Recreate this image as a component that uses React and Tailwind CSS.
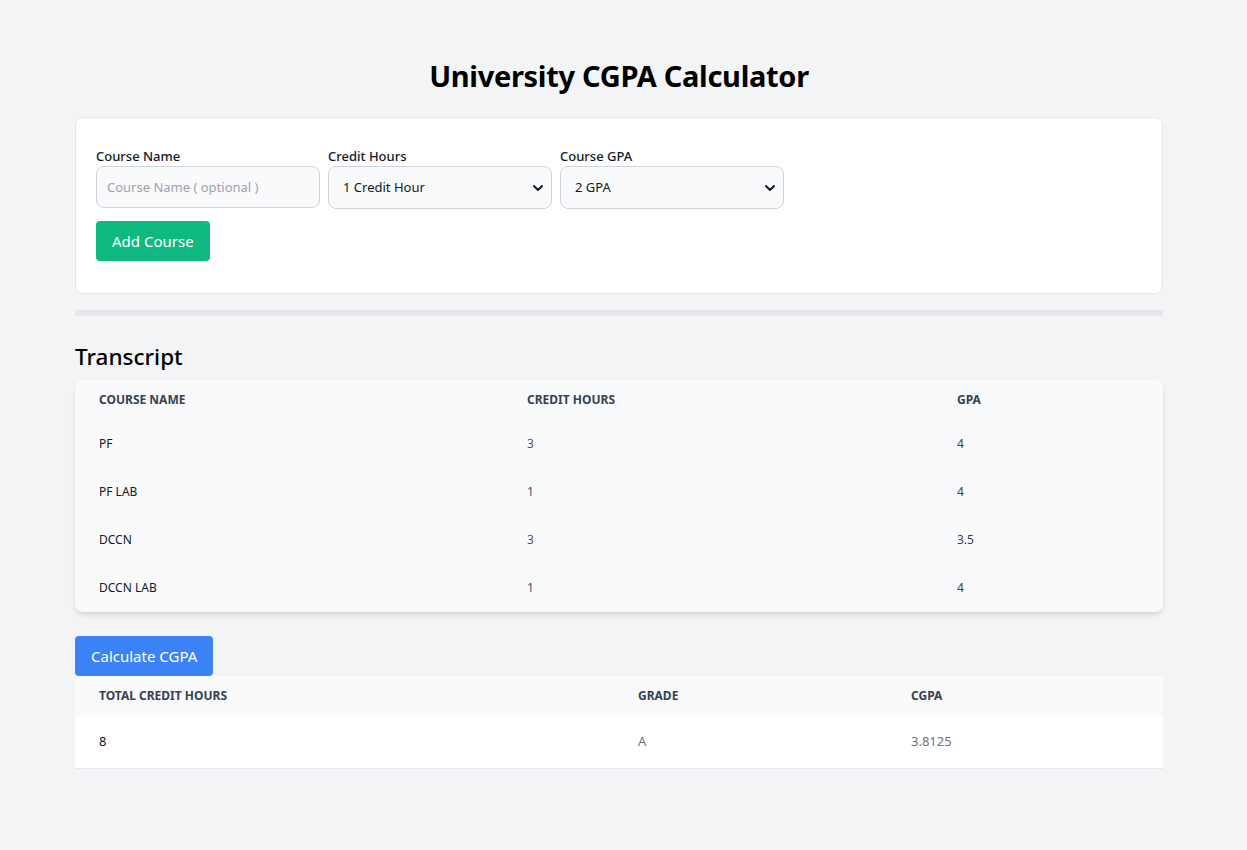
export default function App() {
  const rows = [
    { name: "PF", ch: "3", gpa: "4" },
    { name: "PF LAB", ch: "1", gpa: "4" },
    { name: "DCCN", ch: "3", gpa: "3.5" },
    { name: "DCCN LAB", ch: "1", gpa: "4" },
  ];
  const font = { fontFamily: '"Noto Sans", "Open Sans", sans-serif' };
  return (
    <div className="min-h-[850px] bg-[#f3f4f6] pb-20" style={font}>
      <div className="ml-[75px] flex w-[1088px] flex-col">
        <h1 className="pt-[56px] pb-[21px] text-center text-[29px] font-bold leading-[40px] text-black tracking-[-0.3px]">
          University CGPA Calculator
        </h1>

        <div className="flex flex-col rounded-lg border border-[#e5e7eb] bg-white px-5 pt-[29px] pb-[32px]">
          <div className="flex gap-2">
            <div className="flex w-[224px] flex-col">
              <label className="mb-[1px] text-[13px] font-medium leading-[18px] text-[#111827]">Course Name</label>
              <input
                placeholder="Course Name ( optional )"
                className="h-[42px] rounded-lg border border-[#d1d5db] bg-[#f9fafb] px-[10px] text-[13px] text-[#111827] placeholder:text-[#9ca3af] outline-none"
              />
            </div>
            <div className="flex w-[224px] flex-col">
              <label className="mb-[1px] text-[13px] font-medium leading-[18px] text-[#111827]">Credit Hours</label>
              <div className="flex h-[43px] items-center justify-between rounded-lg border border-[#d1d5db] bg-[#f9fafb] pl-[14px] pr-[5px]">
                <span className="text-[13px] text-[#111827]">1 Credit Hour</span>
                <Chevron />
              </div>
            </div>
            <div className="flex w-[224px] flex-col">
              <label className="mb-[1px] text-[13px] font-medium leading-[18px] text-[#111827]">Course GPA</label>
              <div className="flex h-[43px] items-center justify-between rounded-lg border border-[#d1d5db] bg-[#f9fafb] pl-[14px] pr-[5px]">
                <span className="text-[13px] text-[#111827]">2 GPA</span>
                <Chevron />
              </div>
            </div>
          </div>
          <div className="mt-3 flex">
            <button className="h-[40px] rounded bg-[#10b981] px-4 text-[15px] text-white">Add Course</button>
          </div>
        </div>

        <div className="mt-4 h-[6px] bg-[#e5e7eb]" />

        <h2 className="mt-[26px] mb-[8px] text-[22.5px] font-medium leading-[30px] text-black">Transcript</h2>

        <div className="rounded-lg bg-[#f9fafb] shadow-md">
          <div className="flex h-[40px] items-center text-[12px] font-bold uppercase text-[#374151]">
            <div className="w-[428px] pl-6">Course Name</div>
            <div className="w-[430px] pl-6">Credit Hours</div>
            <div className="flex-1 pl-6">GPA</div>
          </div>
          {rows.map((r) => (
            <div key={r.name} className="flex h-[48px] items-center text-[12px]">
              <div className="w-[428px] pl-6 font-normal text-[#111827]">{r.name}</div>
              <div className="w-[430px] pl-6 text-[#4b5563]">{r.ch}</div>
              <div className="flex-1 pl-6 text-[#374151]">{r.gpa}</div>
            </div>
          ))}
        </div>

        <div className="mt-6 flex">
          <button className="h-[40px] rounded bg-[#3b82f6] px-4 text-[15px] text-white">Calculate CGPA</button>
        </div>
        <div className="border-b border-[#e5e7eb]">
          <div className="flex h-[40px] items-center bg-[#f9fafb] text-[12px] font-bold uppercase text-[#374151]">
            <div className="w-[539px] pl-6">Total Credit Hours</div>
            <div className="w-[273px] pl-6">Grade</div>
            <div className="flex-1 pl-6">CGPA</div>
          </div>
          <div className="flex h-[52px] items-center bg-white text-[13px]">
            <div className="w-[539px] pl-6 font-normal text-[#111827]">8</div>
            <div className="w-[273px] pl-6 text-[#6b7280]">A</div>
            <div className="flex-1 pl-6 text-[#6b7280]">3.8125</div>
          </div>
        </div>
      </div>
    </div>
  );
}

function Chevron() {
  return (
    <svg width="16" height="16" viewBox="0 0 16 16" fill="none">
      <path d="M4 6l4 4 4-4" stroke="#111827" strokeWidth="2" strokeLinecap="round" strokeLinejoin="round" />
    </svg>
  );
}
